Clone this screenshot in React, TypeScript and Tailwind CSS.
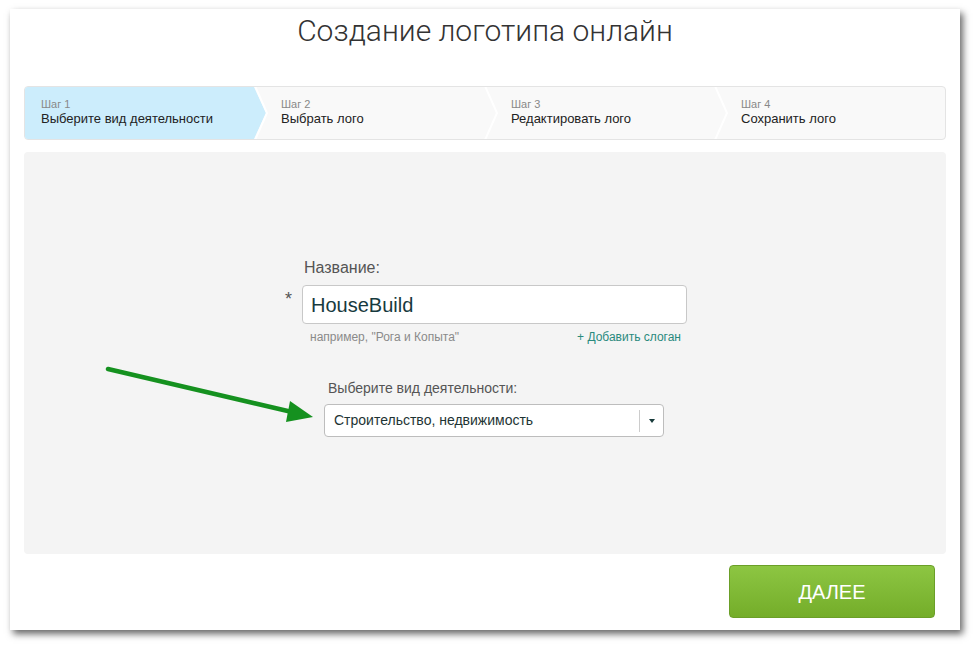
const steps = [
  { n: 1, label: "Выберите вид деятельности" },
  { n: 2, label: "Выбрать лого" },
  { n: 3, label: "Редактировать лого" },
  { n: 4, label: "Сохранить лого" },
];

function Stepper() {
  return (
    <div className="relative h-[54px] rounded-[4px] border border-[#e4e4e4] bg-[#f9f9f9] overflow-hidden">
      <svg className="absolute left-0 top-0" width="920" height="52" viewBox="0 0 920 52">
        <polygon points="0,0 229,0 241,26 229,52 0,52" fill="#ccedfc" />
        <polyline points="230,-1 242,26 230,53" fill="none" stroke="#ffffff" strokeWidth="2" />
        <polyline points="460,-1 472,26 460,53" fill="none" stroke="#ffffff" strokeWidth="2" />
        <polyline points="690,-1 702,26 690,53" fill="none" stroke="#ffffff" strokeWidth="2" />
      </svg>
      <div className="relative flex font-['Liberation_Sans',Arial,sans-serif]">
        {steps.map((s) => (
          <div
            key={s.n}
            className={s.n === 1 ? "w-[230px] pl-[16px] pt-[11px]" : "w-[230px] pl-[26px] pt-[11px]"}
          >
            <div className="text-[11px] leading-[13px] text-[#888888]">Шаг {s.n}</div>
            <div className="text-[13px] leading-[15px] text-[#222222]">{s.label}</div>
          </div>
        ))}
      </div>
    </div>
  );
}

function GreenArrow() {
  return (
    <svg
      className="absolute left-0 top-0 pointer-events-none"
      width="976"
      height="646"
      viewBox="0 0 976 646"
    >
      <line x1="108" y1="369" x2="292" y2="412" stroke="#15911f" strokeWidth="4.5" strokeLinecap="round" />
      <polygon points="313,417 290,401 286,422" fill="#15911f" />
    </svg>
  );
}

function LogoForm() {
  return (
    <div className="h-[402px] rounded-[4px] bg-[#f4f4f4] pt-[107px] font-['Liberation_Sans',Arial,sans-serif]">
      <div className="ml-[280px] text-[16px] leading-[18px] text-[#555555]">Название:</div>
      <div className="mt-[8px] ml-[260px] flex items-start">
        <span className="w-[18px] pl-[1px] mt-[5px] text-[18px] leading-[18px] text-[#555555]">*</span>
        <div className="w-[385px] h-[39px] rounded-[4px] border border-[#c8c8c8] bg-white flex items-center pl-[8px] text-[20px] text-[#173a3e]">
          HouseBuild
        </div>
      </div>
      <div className="mt-[6px] ml-[286px] w-[371px] flex justify-between text-[12px] leading-[14px]">
        <span className="text-[#8a8a8a]">например, "Рога и Копыта"</span>
        <span className="text-[#2a8a7e]">+ Добавить слоган</span>
      </div>
      <div className="mt-[36px] ml-[304px] text-[14px] leading-[16px] text-[#555555]">
        Выберите вид деятельности:
      </div>
      <div className="mt-[8px] ml-[300px] w-[340px] h-[33px] rounded-[4px] border border-[#bdbdbd] bg-white flex items-center">
        <span className="flex-1 pl-[9px] text-[14px] text-[#1e3434]">Строительство, недвижимость</span>
        <span className="w-px h-[22px] bg-[#cccccc]" />
        <span className="w-[23px] flex justify-center">
          <svg width="6" height="4" viewBox="0 0 6 4">
            <polygon points="0,0 6,0 3,4" fill="#173a3a" />
          </svg>
        </span>
      </div>
    </div>
  );
}

export default function App() {
  return (
    <div className="relative w-[976px] h-[646px] bg-white overflow-hidden">
      <div className="ml-[10px] mt-[9px] w-[950px] h-[621px] bg-white shadow-[3px_4px_7px_rgba(0,0,0,0.6)] px-[14px] pt-[1px]">
        <h1 className="mt-[1px] h-[40px] leading-[40px] text-center text-[30px] font-light text-[#333333] font-['Roboto',sans-serif]">
          Создание логотипа онлайн
        </h1>
        <div className="mt-[35px]">
          <Stepper />
        </div>
        <div className="mt-[12px]">
          <LogoForm />
        </div>
        <div className="mt-[11px] flex justify-end pr-[11px]">
          <button className="w-[206px] h-[53px] rounded-[4px] border border-[#6b9f28] bg-gradient-to-b from-[#8dc642] to-[#74ad29] text-white text-[20px] font-['Liberation_Sans',Arial,sans-serif]">
            ДАЛЕЕ
          </button>
        </div>
      </div>
      <GreenArrow />
    </div>
  );
}
